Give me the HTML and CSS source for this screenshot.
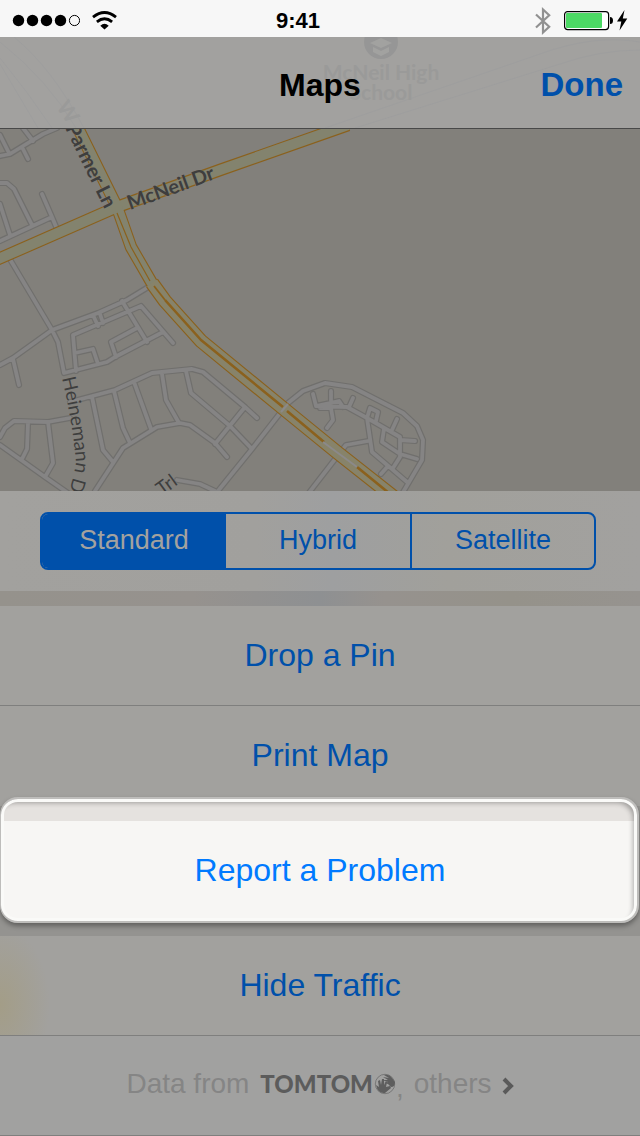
FILE: index.html
```html
<!DOCTYPE html>
<html lang="en">
<head>
<meta charset="utf-8">
<meta name="viewport" content="width=device-width, initial-scale=1">
<title>Maps</title>
<link rel="stylesheet" href="styles.css">
</head>
<body>
<div class="status">
  <div class="status-left">
    <svg width="68" height="13" viewBox="0 0 68 13" aria-label="Signal">
      <circle cx="6.5" cy="6.5" r="5.7"/><circle cx="20.5" cy="6.5" r="5.7"/><circle cx="34.5" cy="6.5" r="5.7"/><circle cx="48.5" cy="6.5" r="5.7"/>
      <circle cx="62.5" cy="6.5" r="5.1" fill="none" stroke="#000" stroke-width="1"/>
    </svg>
    <svg width="25" height="19" viewBox="0 0 25 19" aria-label="Wi-Fi" fill="none" stroke="#000" stroke-width="2.8">
      <path d="M1 6.2Q12.500-3.200 24 6.200"/><path d="M4.900 10.800Q12.500 4.600 20.100 10.800"/>
      <path d="M8.300 14.800Q12.500 10.800 16.700 14.800L12.500 18.500Z" fill="#000" stroke="none"/>
    </svg>
  </div>
  <time class="clock">9:41</time>
  <div class="status-right">
    <svg width="16" height="28" viewBox="0 0 16 28" aria-label="Bluetooth" fill="none" stroke="#919191" stroke-width="2.200"><path d="M1 7.500L14.200 19.800L8 25.500V2.500L14.200 8.200L1 20.500"/></svg>
    <svg width="65" height="21" viewBox="0 0 65 21" aria-label="Battery charging">
      <rect x="1.600" y="1.600" width="44" height="18" rx="3" fill="#fff" stroke="#000" stroke-width="1.200"/>
      <rect x="3" y="3" width="36" height="15" rx="1" fill="#4cd964"/>
      <path d="M47 7Q50 7 50 10.500T47 14Z"/>
      <path d="M61.500 0L54 11.500H58.300L56.500 20.500L64.300 8.500H59.800Z"/>
    </svg>
  </div>
</div>

<header class="navbar">
  <svg class="navbar-ghost" viewBox="0 37 640 91" preserveAspectRatio="xMidYMid slice" aria-hidden="true">
    <g fill="none" stroke="#9e9e9e" stroke-width="1"><path d="M0 58Q28 92 52 128M0 64L38 128M0 42Q48 80 76 128M14 37Q52 68 84 128M325 128L540 54Q595 34 640 42M355 128L560 64Q600 50 640 50"/></g>
    <circle cx="381" cy="42" r="17" fill="#969696"/>
    <path d="M370 43L381 38L392 43L381 48ZM373 47V52L381 56L389 52V47L381 51Z" fill="#a2a2a0"/>
    <g class="ghost-label"><text x="381" y="80">McNeil High</text><text x="381" y="100">School</text><text transform="translate(62 116) rotate(56)">W</text></g>
  </svg>
  <h1>Maps</h1>
  <button class="done" type="button">Done</button>
</header>

<main>
  <svg class="map" viewBox="0 129 640 362" preserveAspectRatio="xMidYMid slice" role="img" aria-label="Street map">
    <defs>
      <path id="streets" d="M0 156L10 154L23 146L43 134L57 128M0 135L9 153M23 128L33 141M23 149L28 159M0 183H7L14 189L32 225M0 204L10 235M0 241L52 217M42 194L52 217L57 229M11 261L52 330L58 342L64 373M0 365L13 358L52 330L98 313L127 300L150 286M13 359L19 385M93 315L98 326M100 314L103 323M76 371L73 335L141 306L173 343M64 373L107 362L115 357L163 332M122 301L147 342M137 328L111 342L116 357M75 353L93 349L98 364M70 402L115 390L152 373L192 369L203 372L245 407L257 418M92 397L103 450L113 462M114 391L123 428L130 443M134 382L151 429M162 374L166 400L179 423M186 371L191 393L230 426L252 449M95 491L123 448L157 427L180 423L190 425L215 443L227 457M215 444L245 407M218 491L252 449L288 403L303 391L325 383L352 387L403 413L417 426L423 440L422 460L402 494M177 480L200 484L215 491M0 437L5 428L14 421L48 422L70 418M28 423L27 449L22 459M48 422L53 463L45 477M0 445L45 477L68 493M313 394L316 406L347 407L367 418L400 437V457L393 468M331 391V401M316 406L339 401L343 407M353 398L349 407M320 408H331L333 420L327 428M367 418L370 408L378 412L376 421M397 419L392 430M367 418L372 452L407 482M384 429L382 442L400 454L417 459M400 440L415 441M388 466L381 474M368 441L346 445L308 494"/>
      <path id="mcneil" d="M-4 260L117 207L220 170L348 125"/>
      <path id="parmer" d="M76 124L117 207L131 247L153 285"/>
      <path id="parmer-wide" d="M152 283L165 301L201 341L284 409L338 453L395 498"/>
      <path id="heinemann-label" d="M62 378Q73 425 76 463Q72 488 58 520"/>
    </defs>
    <rect x="0" y="129" width="640" height="362" fill="#82807b"/>
    <g fill="none" stroke-linejoin="round" stroke-linecap="round">
      <use href="#streets" stroke="#706f6d" stroke-width="6.200"/><use href="#streets" stroke="#858484" stroke-width="3.800"/>
    </g>
    <g fill="none" stroke-linejoin="round">
      <use href="#mcneil" stroke="#8b611d" stroke-width="12.500"/>
      <use href="#parmer" stroke="#8b611d" stroke-width="12.500"/>
      <use href="#parmer-wide" stroke="#8b611d" stroke-width="14.500"/>
      <use href="#mcneil" stroke="#83836e" stroke-width="10.300"/>
      <use href="#parmer" stroke="#83836e" stroke-width="10.300"/>
      <use href="#parmer-wide" stroke="#87836a" stroke-width="12.200"/>
      <path d="M117 213L131 247L150 281" stroke="#8b611d" stroke-width="1.200"/>
      <path d="M154 286L165 300" stroke="#8b611d" stroke-width="1.800"/>
      <path d="M165 300L201 340L283 407M287 411L324 442M357 467L395 498" stroke="#8b611d" stroke-width="2.600"/>
      <path d="M281 412L288 404M323 442L357 467" stroke="#8b8989" stroke-width="2"/>
    </g>
    <g class="map-label">
      <text class="major" transform="translate(65 128) rotate(64)">Parmer Ln</text>
      <text class="major" transform="translate(130 210) rotate(-20)">McNeil Dr</text>
      <text class="minor"><textPath href="#heinemann-label">Heinemann Dr</textPath></text>
      <text class="minor" transform="translate(162 496) rotate(-36)">Trl</text>
    </g>
  </svg>

  <section class="types">
    <div class="segmented" role="group" aria-label="Map type">
      <button class="segment selected" type="button" aria-pressed="true">Standard</button>
      <button class="segment" type="button" aria-pressed="false">Hybrid</button>
      <button class="segment" type="button" aria-pressed="false">Satellite</button>
    </div>
  </section>

  <section class="group">
    <button class="row" type="button">Drop a Pin</button>
    <button class="row" type="button">Print Map</button>
  </section>
  <section class="group highlighted">
    <div class="spotlight"></div>
    <button class="row" type="button">Report a Problem</button>
  </section>
  <section class="group last">
    <button class="row" type="button">Hide Traffic</button>
    <a class="row credits" href="#credits">
      <span>Data from</span>
      <span class="brand">TOMTOM<svg width="22" height="22" viewBox="0 0 22 22" aria-hidden="true">
        <circle cx="11" cy="11" r="9.700" fill="none" stroke="#666" stroke-width=".7"/>
        <path d="M2 12L5 14L4 8L6 7L7 12L8 6L10 6L10 12L12 8L13 9L12 14L16 13L17 15L11 20Q4 21 2 12Z" fill="#5e5e5e"/>
        <path d="M9 4L15 5L10 2Q15 1 18 5L21 9Q21 14 17 14L14 11L10 10L14 9L8 7L14 7Z" fill="#5e5e5e"/>
      </svg></span><span class="comma">,</span>
      <span class="others">others</span>
      <svg class="chevron" width="12" height="18" viewBox="0 0 12 18" aria-hidden="true"><path d="M2 2L9 9L2 16" fill="none" stroke="#5a5a5a" stroke-width="4"/></svg>
    </a>
  </section>
</main>
</body>
</html>
```
FILE: styles.css
```css
* { box-sizing: border-box; }

body {
  margin: 0;
  background: #969490;
  color: #000;
  font-family: "Liberation Sans", Arial, sans-serif;
}

button {
  margin: 0;
  padding: 0;
  border: 0;
  background: none;
  font-family: inherit;
  color: #0050aa;
}

svg { display: block; }

.status {
  display: grid;
  grid-template-columns: 6fr auto 7fr;
  align-items: center;
  height: 37px;
  padding: 4px 12px 0;
  background: #f7f7f7;
}

.status-left,
.status-right {
  display: flex;
  align-items: center;
  gap: 12px;
}

.status-right { justify-content: flex-end; }

.clock {
  font-size: 22px;
  line-height: 26px;
  font-weight: bold;
}

.navbar {
  position: relative;
  display: grid;
  grid-template-columns: 1fr auto 1fr;
  align-items: center;
  height: 92px;
  padding: 4px 17px 0;
  border-bottom: 1px solid #484848;
  background: #a2a19f;
}

.navbar-ghost {
  position: absolute;
  inset: 0;
  width: 100%;
  height: 100%;
}

.ghost-label {
  font: bold 21px Lato, sans-serif;
  fill: #9a9a99;
  text-anchor: middle;
}

.navbar h1 {
  position: relative;
  grid-column: 2;
  margin: 0;
  font-size: 32px;
  line-height: 40px;
}

.done {
  position: relative;
  justify-self: end;
  font-size: 33px;
  line-height: 40px;
  font-weight: bold;
}

.map { width: 100%; }

.map-label {
  font-family: Lato, sans-serif;
  fill: #3e3e3e;
  stroke: rgba(134, 132, 128, 0.6);
  stroke-width: 1px;
  paint-order: stroke;
}

.major { font-size: 20px; font-weight: bold; }
.minor { font-size: 19px; }

.types {
  padding: 21px 44px 21px 40px;
  background: linear-gradient(90deg, #a2a19e, #a1a09d 40%, #9e9fa0 52%, #a1a09b 70%, #a2a19f);
}

.segmented {
  display: grid;
  grid-template-columns: repeat(3, 1fr);
  height: 58px;
  overflow: hidden;
  border: 2px solid #0050aa;
  border-radius: 8px;
}

.segment {
  padding-bottom: 1px;
  font-size: 27px;
}

.segment:last-child { border-left: 2px solid #0050aa; }

.segment.selected {
  background: #0050aa;
  color: #a3a29f;
}

.group {
  padding-top: 15px;
  background: linear-gradient(90deg, #95928c, #96928e 30%, #8e9092 50%, #96928e 60%, #95928a 80%, #96938f);
}

.row {
  display: flex;
  align-items: center;
  justify-content: center;
  width: 100%;
  height: 100px;
  padding-bottom: 1px;
  background: #a2a19e;
  font-size: 32px;
}

.row + .row { border-top: 1px solid #7f7f7e; }

.group:not(.last) .row + .row { height: 101px; padding-bottom: 2px; }

.group:not(.last) .row:first-child { height: 99px; }

.highlighted {
  position: relative;
  background: #949390;
}

.highlighted .row {
  position: relative;
  padding-bottom: 2px;
  background: none;
  color: #007aff;
}

.spotlight {
  position: absolute;
  inset: -9px 1px -2px 0;
  border: 2px solid #bebdbb;
  border-left-width: 1px;
  border-radius: 18px;
  background: linear-gradient(#e5e2df 22px, #f7f6f4 22px);
  box-shadow: inset 0 0 0 3px #fafaf8, inset -4px 4px 5px rgba(0, 0, 0, 0.3), 0 3px 5px rgba(0, 0, 0, 0.35);
}

.last {
  border-bottom: 1px solid #7f7f7e;
  background: #949390;
}

.last .row:first-child {
  height: 99px;
  background: radial-gradient(ellipse 50px 80px at 0 70%, #a39d87, #a2a19e);
}

.last .credits {
  padding-bottom: 4px;
  background: #a1a1a0;
  color: #858585;
  font-size: 28px;
  text-decoration: none;
}

.brand {
  display: flex;
  align-items: center;
  gap: 1px;
  margin-left: 11px;
  color: #5c5c5c;
  font-family: Lato, sans-serif;
  font-size: 24px;
  font-weight: 900;
}

.comma { padding-top: 8px; }
.others { margin-left: 10px; }
.chevron { margin: 4px 0 0 10px; }
```
